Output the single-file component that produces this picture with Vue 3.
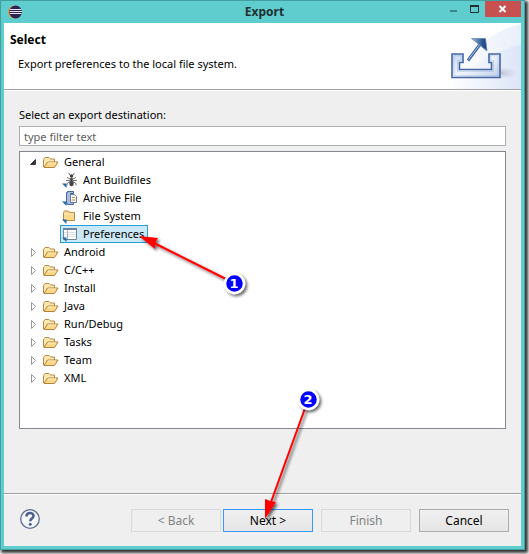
<script setup>
import { ref } from 'vue'

const filter = ref('')
const selected = ref('Preferences')
const tree = ref([
  {
    name: 'General',
    open: true,
    children: [
      { name: 'Ant Buildfiles', icon: 'ant' },
      { name: 'Archive File', icon: 'archive' },
      { name: 'File System', icon: 'folder' },
      { name: 'Preferences', icon: 'table' },
    ],
  },
  ...['Android', 'C/C++', 'Install', 'Java', 'Run/Debug', 'Tasks', 'Team', 'XML'].map((name) => ({
    name,
    open: false,
    children: [],
  })),
])
</script>

<template>
  <div class="desktop">
    <main class="window">
      <header class="titlebar">
        <svg class="logo" viewBox="0 0 14 14" aria-hidden="true">
          <circle cx="6.500" cy="7" r="6.500" fill="#f29a2e" />
          <circle cx="7.600" cy="7" r="6.400" fill="#2c2255" />
          <path d="M2 4.500h11.500M1.500 6.500h12.500M2 8.500h11.500" stroke="#e8e4f4" stroke-width="1" />
        </svg>
        <h1>Export</h1>
        <div class="controls">
          <button class="control" aria-label="Minimize">
            <svg width="22" height="16" viewBox="0 0 22 16"><path d="M5 9h7v2H5z" fill="#3b8584" /></svg>
          </button>
          <button class="control" aria-label="Maximize">
            <svg width="18" height="16" viewBox="0 0 18 16"><path d="M3.500 4.500h8v7h-8z" fill="none" stroke="#222f33" /><path d="M3 4h9v2H3z" fill="#222f33" /></svg>
          </button>
          <button class="control close" aria-label="Close">
            <svg width="36" height="16" viewBox="0 0 36 16"><path d="M14.500 5l6 6M20.500 5l-6 6" stroke="#fff" stroke-width="2" /></svg>
          </button>
        </div>
      </header>

      <div class="body">
        <section class="banner">
          <div class="banner-text">
            <h2>Select</h2>
            <p>Export preferences to the local file system.</p>
          </div>
          <svg class="banner-art" viewBox="0 0 75 66" aria-hidden="true">
            <defs>
              <linearGradient id="sky" x1="0" x2="1"><stop offset="0" stop-color="#fff" /><stop offset="1" stop-color="#dce5f7" /></linearGradient>
              <linearGradient id="sky2" x1="0" x2="1"><stop offset="0" stop-color="#fff" /><stop offset="1" stop-color="#e9effa" /></linearGradient>
              <linearGradient id="tray" x1="0" x2="1" y2="1"><stop offset="0" stop-color="#c9d9f0" /><stop offset=".5" stop-color="#f0f5fd" /><stop offset="1" stop-color="#bccde9" /></linearGradient>
              <linearGradient id="head" x1="0" x2="1"><stop offset="0" stop-color="#9cc3e4" /><stop offset=".7" stop-color="#2d5590" /><stop offset="1" stop-color="#1d3f78" /></linearGradient>
              <radialGradient id="shade"><stop offset="0" stop-color="#a8a4b4" stop-opacity=".6" /><stop offset="1" stop-color="#b8b4c4" stop-opacity="0" /></radialGradient>
            </defs>
            <path d="M75 1C48 6 20 30 3 66h72z" fill="url(#sky2)" />
            <path d="M75 22C50 26 24 42 3 66h72z" fill="url(#sky)" />
            <ellipse cx="54" cy="50" rx="18" ry="6" fill="url(#shade)" />
            <path d="M6 31h11v8.500h-3.500v7h32v-7H43V31h11v23.500H6z" fill="url(#tray)" stroke="#4467a5" stroke-width="1.600" />
            <path d="M8 32.800h7v4.500h-3.500v11h36v-11h-3v-4.500h7.500v20H8z" fill="none" stroke="#7f9fd0" stroke-opacity=".35" />
            <path d="M22 37.500L35 20" stroke="#4467a5" stroke-width="3" />
            <path d="M22.500 36.500L34.500 20.500" stroke="#9dbde2" stroke-width="1" />
            <path d="M25.500 15.500h14L41 28z" fill="url(#head)" stroke="#6688bb" stroke-width=".8" />
          </svg>
        </section>

        <section class="content">
          <label for="filter">Select an export destination:</label>
          <input id="filter" v-model="filter" type="text" placeholder="type filter text" />
          <ul class="tree" role="tree">
            <li v-for="node in tree" :key="node.name" role="treeitem">
              <div class="row">
                <button class="toggle" :aria-label="'Toggle ' + node.name" @click="node.open = !node.open">
                  <svg viewBox="0 0 8 10">
                    <path v-if="node.open" d="M6.500 2.500v5h-5z" fill="#333" stroke="#222" stroke-width=".8" />
                    <path v-else d="M2.500 1.500v8L6.500 5.500z" fill="#fff" stroke="#999" />
                  </svg>
                </button>
                <svg class="icon" viewBox="0 0 16 16" aria-hidden="true">
                  <path d="M.5 13V5.500L2 3.500h4L7.500 5h4v3" fill="#fbe7b0" stroke="#b88a44" />
                  <path d="M1 13.500L4.500 8h10.500L11.500 13.500z" fill="#fbd888" stroke="#b5823c" />
                  <path d="M5 9h8" stroke="#fff0c4" />
                </svg>
                <span class="name">{{ node.name }}</span>
              </div>
              <ul v-if="node.open" role="group">
                <li v-for="leaf in node.children" :key="leaf.name" role="treeitem">
                  <button class="leaf" :class="{ selected: selected === leaf.name }" @click="selected = leaf.name">
                    <svg class="icon" viewBox="0 0 16 16" aria-hidden="true">
                      <g v-if="leaf.icon === 'ant'" stroke="#666" fill="#444">
                        <path d="M9 4L7 2V1M10 4l2-2V1M8 7L5 5.500M11 7l3-1.500M8 8.500H4M11 8.500h4M8 9.500l-3 2v2M11 9.500l3 2v2" fill="none" stroke-width=".9" />
                        <circle cx="9.500" cy="4" r="1.800" stroke="none" />
                        <ellipse cx="9.500" cy="7.500" rx="1.500" ry="2" stroke="none" />
                        <ellipse cx="9.500" cy="11.500" rx="2.200" ry="2.800" stroke="none" />
                      </g>
                      <g v-else-if="leaf.icon === 'archive'">
                        <path d="M5.500 1.500h6v2h-3v9h3v2h-6v-1h-1v-11h1z" fill="#a9bcdf" stroke="#4b6496" />
                        <path d="M8.500 4.500h4l2 2v6h-6z" fill="#f5f2e6" stroke="#687aa4" />
                        <path d="M10 7.500h3M10 10h3" stroke="#b99b58" />
                      </g>
                      <g v-else-if="leaf.icon === 'folder'">
                        <path d="M1.500 12.500v-8l1-1.500h4l1 1.500h5v8z" fill="#fbd98c" stroke="#b98942" />
                        <path d="M2.500 6h9" stroke="#fff0c4" />
                      </g>
                      <g v-else>
                        <path d="M1.500 2.500h13v11h-13z" fill="#fff" stroke="#71849f" />
                        <path d="M1 2h14v2H1z" fill="#71849f" />
                        <path d="M2 6.500h12M2 8.500h12M2 10.500h12" stroke="#dce1e6" />
                        <path d="M5.500 4v9" stroke="#a5b1c0" />
                      </g>
                      <path d="M0 11.500L4.500 16V11.500z" fill="#1f6aa5" />
                    </svg>
                    <span class="name">{{ leaf.name }}</span>
                  </button>
                </li>
              </ul>
            </li>
          </ul>
        </section>

        <footer class="footer">
          <button class="help" aria-label="Help">
            <svg viewBox="0 0 22 22">
              <circle cx="11" cy="11" r="9.300" fill="#f4f6fa" stroke="#5c6e91" stroke-width="1.300" />
              <path d="M7.500 8.500C7.500 3.800 14.700 4 14.500 8c-.1 2.500-3.300 2.700-3.300 5.300" fill="none" stroke="#4d618c" stroke-width="2.600" />
              <circle cx="11.200" cy="16.300" r="1.500" fill="#4d618c" />
            </svg>
          </button>
          <div class="pair">
            <button class="action" disabled>&lt; Back</button>
            <button class="action primary">Next &gt;</button>
          </div>
          <button class="action" disabled>Finish</button>
          <button class="action">Cancel</button>
        </footer>
      </div>
    </main>

    <svg class="callouts" width="529" height="554" viewBox="0 0 529 554" aria-hidden="true">
      <defs>
        <filter id="drop" x="-20%" y="-20%" width="150%" height="150%">
          <feDropShadow dx="2" dy="2" stdDeviation="1.500" flood-color="#000" flood-opacity=".6" />
        </filter>
      </defs>
      <g filter="url(#drop)">
        <path d="M234 283L154 243M308 400L271 502" stroke="#f00" stroke-width="2" />
        <path d="M139 236l19 2-3 5 0 6zM265 519l0-20 5 2 6 1z" fill="#f00" />
      </g>
      <g filter="url(#drop)" fill="#00f" stroke="#fff" stroke-width="2.500">
        <circle cx="234.500" cy="283.500" r="9.500" />
        <circle cx="308.500" cy="399.500" r="9.500" />
      </g>
      <g class="digits">
        <text x="234" y="288">1</text>
        <text x="308" y="404">2</text>
      </g>
    </svg>
  </div>
</template>

<style>
body {
  background: #fff;
}
</style>

<style scoped>
* {
  box-sizing: border-box;
}
.desktop {
  position: relative;
  min-height: 100vh;
  padding: 0 4px 4px 0;
  display: flex;
  overflow: hidden;
  font: 11px/18px "Noto Sans", "Open Sans", sans-serif;
  color: #000;
}
h1,
h2,
p,
ul {
  margin: 0;
  padding: 0;
  list-style: none;
}
button {
  font: inherit;
  color: inherit;
  padding: 0;
  border: 0;
  background: none;
}
svg {
  display: block;
}
.window {
  flex: 1;
  min-width: 0;
  display: flex;
  flex-direction: column;
  padding: 0 3px 3px;
  background: #5fcdcd;
  border: 1px solid #419f9f;
  box-shadow: 2px 2px 3px 1px #333;
}
.titlebar {
  display: grid;
  grid-template-columns: 1fr auto 1fr;
  align-items: center;
  height: 22px;
  padding-left: 4px;
}
.logo {
  width: 14px;
  height: 14px;
}
.titlebar h1 {
  font-size: 12px;
  line-height: 20px;
  color: #222f33;
}
.controls {
  display: flex;
  justify-content: flex-end;
  align-self: start;
}
.close {
  background: #c75050;
}
.body {
  flex: 1;
  display: flex;
  flex-direction: column;
  background: #efefef;
}
.banner {
  display: flex;
  justify-content: space-between;
  height: 67px;
  background: #fff;
  border-bottom: 1px solid #a0a0a0;
}
.banner-text {
  padding: 8px 0 0 6px;
}
.banner h2 {
  font-size: 12px;
  line-height: 18px;
}
.banner p {
  padding: 6px 0 0 8px;
}
.banner-art {
  width: 75px;
  height: 66px;
}
.content {
  flex: 1;
  display: flex;
  flex-direction: column;
  padding: 15px 15px 64px;
  border-top: 1px solid #fff;
}
.content input {
  height: 20px;
  margin: 2px 0 5px;
  padding: 0 4px;
  border: 1px solid #abadb3;
  background: #fff;
  font: inherit;
}
.content input::placeholder {
  color: #606060;
  opacity: 1;
}
.tree {
  flex: 1;
  padding: 1px 0 0 9px;
  border: 1px solid #828790;
  background: #fff;
}
.row {
  display: flex;
  align-items: center;
  height: 18px;
}
.toggle {
  width: 14px;
}
.toggle svg {
  width: 8px;
  height: 10px;
}
.icon {
  width: 16px;
  height: 16px;
  flex: none;
}
.name {
  padding-left: 5px;
}
.leaf {
  display: flex;
  align-items: center;
  height: 18px;
  margin-left: 31px;
  padding: 0 3px 0 1px;
  border: 1px solid transparent;
}
.leaf.selected {
  background: #cbe8f6;
  border-color: #26a0da;
}
.footer {
  display: flex;
  align-items: flex-start;
  gap: 8px;
  padding: 14px 12px 14px 15px;
  border-top: 1px solid #a0a0a0;
  box-shadow: inset 0 1px #fff;
}
.help {
  margin-right: auto;
}
.help svg {
  width: 22px;
  height: 22px;
}
.pair {
  display: flex;
  gap: 2px;
}
.action {
  width: 90px;
  height: 23px;
  margin-top: 1px;
  border: 1px solid #acacac;
  background: linear-gradient(#f0f0f0, #e5e5e5);
  font-size: 12px;
}
.action:disabled {
  border-color: #d9d9d9;
  background: #efefef;
  color: #838383;
}
.action.primary {
  border-color: #3399ff;
}
.callouts {
  position: absolute;
  top: 0;
  left: 0;
  pointer-events: none;
}
.digits {
  font: bold 13px "DejaVu Sans", sans-serif;
  fill: #fff;
  text-anchor: middle;
}
</style>
